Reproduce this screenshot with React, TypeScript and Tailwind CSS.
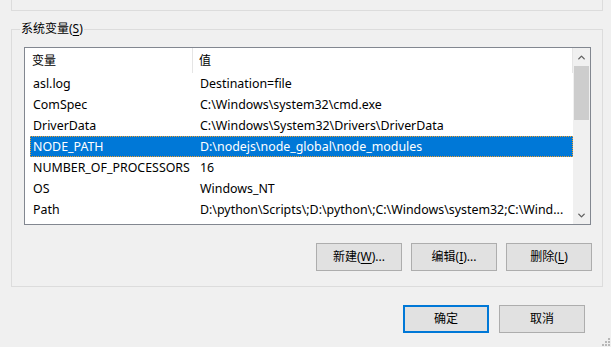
import { ChevronUp, ChevronDown } from "lucide-react";

type EnvVar = {
  name: string;
  value: string;
};

const vars: EnvVar[] = [
  { name: "asl.log", value: "Destination=file" },
  { name: "ComSpec", value: "C:\\Windows\\system32\\cmd.exe" },
  { name: "DriverData", value: "C:\\Windows\\System32\\Drivers\\DriverData" },
  { name: "NODE_PATH", value: "D:\\nodejs\\node_global\\node_modules" },
  { name: "NUMBER_OF_PROCESSORS", value: "16" },
  { name: "OS", value: "Windows_NT" },
  {
    name: "Path",
    value: "D:\\python\\Scripts\\;D:\\python\\;C:\\Windows\\system32;C:\\Wind...",
  },
];

function WinButton({
  children,
  primary,
}: {
  children: React.ReactNode;
  primary?: boolean;
}) {
  return (
    <button
      type="button"
      className={
        primary
          ? "flex h-[28px] w-[86px] items-center justify-center border-2 border-[#0078d7] bg-[#e1e1e1] text-[12px] leading-[16px] text-black"
          : "flex h-[28px] w-[86px] items-center justify-center border border-[#adadad] bg-[#e1e1e1] text-[12px] leading-[16px] text-black"
      }
    >
      {children}
    </button>
  );
}

function VarRow({ item, selected }: { item: EnvVar; selected: boolean }) {
  return (
    <div
      className={
        selected
          ? "ml-[5px] flex h-[21px] items-center border border-dotted border-[#f0a030] bg-[#0078d7] text-white"
          : "ml-[5px] flex h-[21px] items-center border border-transparent text-black"
      }
    >
      <div className="w-[166px] shrink-0 whitespace-nowrap pl-[2px] text-[12.4px] leading-[17px]">
        {item.name}
      </div>
      <div className="min-w-0 flex-1 overflow-hidden whitespace-nowrap pl-[3px] text-[12.4px] leading-[17px]">
        {item.value}
      </div>
    </div>
  );
}

export default function App() {
  return (
    <div className='relative h-[347px] w-[611px] overflow-hidden bg-[#f0f0f0] font-["Noto_Sans","Noto_Sans_CJK_SC",sans-serif] text-[12px] leading-[16px] text-black'>
      {/* user variables panel, cut off at the top */}
      <div className="ml-[11px] h-[11px] w-[592px] border-x border-b border-[#dcdcdc]" />

      {/* system variables group */}
      <div className="relative ml-[11px] mt-[18px] h-[258px] w-[592px] border border-[#dcdcdc]">
        <span className="absolute left-[8px] top-[-9px] bg-[#f0f0f0] px-[1px] leading-[16px]">
          系统变量(<span className="underline underline-offset-2">S</span>)
        </span>

        <div className="ml-[12px] mt-[17px] flex h-[178px] w-[567px] border border-[#828790] bg-white">
          <div className="flex min-w-0 flex-1 flex-col">
            <div className="flex h-[25px] items-center">
              <div className="flex h-full w-[168px] items-center border-r border-[#e5e5e5] pl-[7px]">
                变量
              </div>
              <div className="flex h-full flex-1 items-center border-r border-[#e5e5e5] pl-[6px]">
                值
              </div>
            </div>
            {vars.map((v) => (
              <VarRow key={v.name} item={v} selected={v.name === "NODE_PATH"} />
            ))}
          </div>

          <div className="flex w-[17px] shrink-0 flex-col bg-[#f0f0f0]">
            <div className="flex h-[18px] items-center justify-center text-[#606060]">
              <ChevronUp size={11} strokeWidth={3} />
            </div>
            <div className="ml-[1px] h-[54px] w-[15px] bg-[#cdcdcd]" />
            <div className="flex-1" />
            <div className="flex h-[18px] items-center justify-center text-[#606060]">
              <ChevronDown size={11} strokeWidth={3} />
            </div>
          </div>
        </div>

        <div className="mt-[18px] flex w-[580px] justify-end gap-[9px]">
          <WinButton>
            新建(<span className="underline underline-offset-2">W</span>)...
          </WinButton>
          <WinButton>
            编辑(<span className="underline underline-offset-2">I</span>)...
          </WinButton>
          <WinButton>
            删除(<span className="underline underline-offset-2">L</span>)
          </WinButton>
        </div>
      </div>

      <div className="mt-[18px] flex justify-end gap-[10px] pr-[26px]">
        <WinButton primary>确定</WinButton>
        <WinButton>取消</WinButton>
      </div>

      {/* size grip */}
      <svg
        className="absolute bottom-0 right-0"
        width="10"
        height="10"
        viewBox="0 0 10 10"
      >
        <rect x="7" y="1" width="2" height="2" fill="#b8b8b8" />
        <rect x="4" y="4" width="2" height="2" fill="#b8b8b8" />
        <rect x="7" y="4" width="2" height="2" fill="#b8b8b8" />
        <rect x="1" y="7" width="2" height="2" fill="#b8b8b8" />
        <rect x="4" y="7" width="2" height="2" fill="#b8b8b8" />
        <rect x="7" y="7" width="2" height="2" fill="#b8b8b8" />
      </svg>
    </div>
  );
}
